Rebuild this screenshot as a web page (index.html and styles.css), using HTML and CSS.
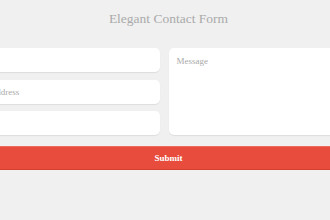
FILE: index.html
```html
<!DOCTYPE html>
<html lang="en">
<head>
    <meta charset="UTF-8">
    <meta name="viewport" content="width=device-width, initial-scale=1.0">
    <title>Elegant Contact Form</title>
    <link rel="stylesheet" href="styles.css">
</head>
<body>
<div class="page">
    <div class="contact">
        <h1 class="contact-title">Elegant Contact Form</h1>
        <form class="contact-form">
            <div class="fields">
                <input type="text" placeholder="Name">
                <input type="email" placeholder="Email Address">
                <input type="text" placeholder="Subject">
            </div>
            <textarea placeholder="Message"></textarea>
            <button type="submit" class="submit-btn">Submit</button>
        </form>
    </div>
</div>
</body>
</html>
```

FILE: styles.css
```css
body {
    margin: 0;
    padding: 0;
    background-color: #f0f0f0;
    font-family: "Liberation Serif", "Times New Roman", serif;
    overflow: hidden;
}
.page {
    display: flex;
    justify-content: center;
    padding-left: 7px;
}
.contact {
    width: 420px;
    flex-shrink: 0;
}
.contact-title {
    margin: 11px 0 21px;
    font-size: 13.5px;
    line-height: 16px;
    font-weight: normal;
    color: #aaa;
    text-align: center;
}
.contact-form {
    display: grid;
    grid-template-columns: 48% 50%;
    justify-content: space-between;
    row-gap: 11px;
}
.fields {
    display: flex;
    flex-direction: column;
    gap: 7.5px;
}
.contact-form input, .contact-form textarea {
    box-sizing: border-box;
    margin: 0;
    border: none;
    border-radius: 5px;
    background: #fff;
    box-shadow: 0 1px 1px rgba(0, 0, 0, 0.08);
    font-family: inherit;
    font-size: 9px;
    color: #666;
    outline: none;
}
.contact-form input {
    height: 24px;
    padding: 0 8px;
}
.contact-form textarea {
    height: 87px;
    padding: 8px;
    line-height: 10px;
    resize: none;
}
.contact-form ::placeholder {
    color: #aaa;
}
.submit-btn {
    grid-column: 1 / -1;
    height: 24px;
    margin: 0;
    border: none;
    border-top: 1px solid #ec6b5e;
    border-bottom: 1px solid #d6402f;
    background-color: #e74c3c;
    box-shadow: 0 2px 0 #f7f7f7;
    color: #fff;
    font-family: inherit;
    font-size: 9px;
    font-weight: bold;
    cursor: pointer;
}
```
